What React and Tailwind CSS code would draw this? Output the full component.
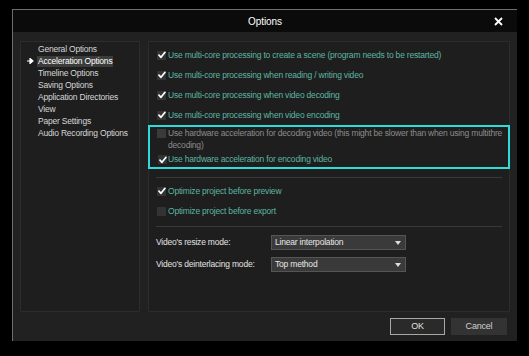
import React from "react";

const font = "font-['Liberation_Sans',Arial,sans-serif]";

function Check({ checked, disabled }) {
  return (
    <div
      className={`w-[9px] h-[9px] shrink-0 flex items-center justify-center ${
        disabled ? "bg-[#3a3a3a]" : "bg-[#333]"
      }`}
    >
      {checked && (
        <svg width="8" height="8" viewBox="0 0 8 8">
          <path d="M1 4.2 L3 6.3 L7 1.3" stroke="#fff" strokeWidth="1.7" fill="none" strokeLinecap="round" strokeLinejoin="round" />
        </svg>
      )}
    </div>
  );
}

function Row({ checked, children, h = "h-[20px]", color = "text-[#5db5a2]" }) {
  return (
    <div className={`${h} flex items-center pl-[8px]`}>
      <Check checked={checked} />
      <span className={`ml-[2px] ${color} whitespace-nowrap`}>{children}</span>
    </div>
  );
}

function Select({ value }) {
  return (
    <div className="w-[135px] h-[15px] bg-[#3a3a3a] border border-[#555] flex items-center justify-between pl-[3px] pr-[4px] text-[#e8e8e8]">
      <span>{value}</span>
      <svg width="6" height="4" viewBox="0 0 6 4">
        <path d="M0 0 L6 0 L3 4 Z" fill="#ddd" />
      </svg>
    </div>
  );
}

export default function App() {
  const items = [
    "General Options",
    "Acceleration Options",
    "Timeline Options",
    "Saving Options",
    "Application Directories",
    "View",
    "Paper Settings",
    "Audio Recording Options",
  ];
  return (
    <div className={`w-[529px] h-[356px] bg-black pt-[9px] pl-[12px] ${font} text-[8.5px] tracking-[-0.2px]`}>
      <div className="w-[505px] h-[332px] bg-[#212121] border-t border-l border-[#6e6e6e] flex flex-col">
        {/* title bar */}
        <div className="h-[22px] bg-[#0b0b0b] grid grid-cols-[1fr_auto_1fr] items-center">
          <div />
          <div className="text-[10px] text-white tracking-[-0.1px]">Options</div>
          <div className="flex justify-end pr-[14px]">
            <svg width="9" height="9" viewBox="0 0 9 9">
              <path d="M1 1 L8 8 M8 1 L1 8" stroke="#fff" strokeWidth="1.8" />
            </svg>
          </div>
        </div>
        {/* body */}
        <div className="flex gap-[8px] pl-[7px] pt-[9px]">
          {/* left panel */}
          <div className="w-[120px] h-[271px] bg-[#1e1e1e] border border-[#2c2c2c] pt-[1px]">
            {items.map((t, i) => (
              <div key={t} className="h-[12px] flex items-center">
                <div className="w-[16px] flex justify-end pr-[3px]">
                  {i === 1 && (
                    <svg width="7" height="6" viewBox="0 0 7 6">
                      <path d="M0 3 L4 3 M3 0.5 L6 3 L3 5.5 Z" stroke="#fff" strokeWidth="1.2" fill="#fff" />
                    </svg>
                  )}
                </div>
                <span
                  className={`px-[1px] leading-[11px] ${
                    i === 1 ? "bg-[#3c3c3c] text-white" : "text-[#d6d6d6]"
                  }`}
                >
                  {t}
                </span>
              </div>
            ))}
          </div>
          {/* right panel */}
          <div className="w-[362px] h-[271px] bg-[#1e1e1e] border border-[#2c2c2c] pt-[3px] flex flex-col">
            <Row checked>Use multi-core processing to create a scene (program needs to be restarted)</Row>
            <Row checked>Use multi-core processing when reading / writing video</Row>
            <Row checked>Use multi-core processing when video decoding</Row>
            <Row checked>Use multi-core processing when video encoding</Row>
            <div className="-mx-[1px] h-[44px] border-2 border-[#2fdcdc] flex flex-col overflow-hidden">
              <div className="flex pl-[7px] pt-[1px]">
                <div className="pt-[1px]">
                  <div className="w-[9px] h-[9px] bg-[#3a3a3a]" />
                </div>
                <div className="ml-[2px] text-[#8c8c8c] leading-[12px] -mt-[1px]">
                  <div className="whitespace-nowrap">
                    Use hardware acceleration for decoding video (this might be slower than when using multithre
                  </div>
                  <div>decoding)</div>
                </div>
              </div>
              <Row checked h="h-[16px] mt-[1px]">
                <span className="-ml-[1px]">Use hardware acceleration for encoding video</span>
              </Row>
            </div>
            <div className="mt-[8px] mx-[7px] h-px bg-[#383838]" />
            <div className="mt-[3px]">
              <Row checked>Optimize project before preview</Row>
              <Row>Optimize project before export</Row>
            </div>
            <div className="mt-[5px] mx-[7px] h-px bg-[#383838]" />
            <div className="pl-[7px] mt-[8px] flex items-center h-[15px]">
              <span className="w-[115px] text-[#e2e2e2]">Video's resize mode:</span>
              <Select value="Linear interpolation" />
            </div>
            <div className="pl-[7px] mt-[7px] flex items-center h-[15px]">
              <span className="w-[115px] text-[#e2e2e2]">Video's deinterlacing mode:</span>
              <Select value="Top method" />
            </div>
          </div>
        </div>
        {/* footer */}
        <div className="flex justify-end gap-[6px] pr-[10px] mt-[6px]">
          <div className="w-[55px] h-[17px] bg-[#2a2a2a] border border-[#a8a8a8] flex items-center justify-center text-[#e0e0e0] text-[9px]">
            OK
          </div>
          <div className="w-[56px] h-[17px] bg-[#333] flex items-center justify-center text-[#d0d0d0] text-[9px]">
            Cancel
          </div>
        </div>
      </div>
    </div>
  );
}
